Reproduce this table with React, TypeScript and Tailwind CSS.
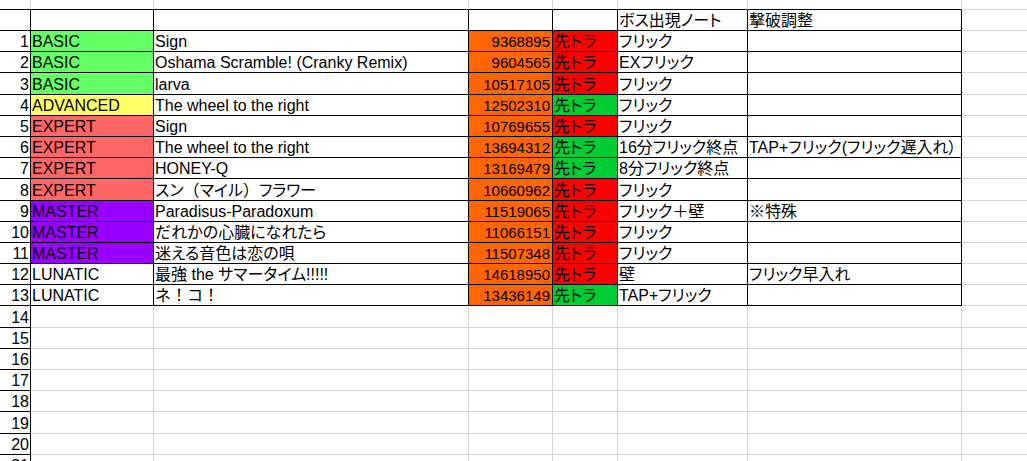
import React from "react";

type Row = {
  n: number;
  level: string;
  song: React.ReactNode;
  score: string;
  tra: "red" | "green";
  boss: string;
  adj: string;
};

const FW = "[font-feature-settings:normal]";

const rows: Row[] = [
  { n: 1, level: "BASIC", song: "Sign", score: "9368895", tra: "red", boss: "フリック", adj: "" },
  { n: 2, level: "BASIC", song: "Oshama Scramble! (Cranky Remix)", score: "9604565", tra: "red", boss: "EXフリック", adj: "" },
  { n: 3, level: "BASIC", song: "larva", score: "10517105", tra: "red", boss: "フリック", adj: "" },
  { n: 4, level: "ADVANCED", song: "The wheel to the right", score: "12502310", tra: "green", boss: "フリック", adj: "" },
  { n: 5, level: "EXPERT", song: "Sign", score: "10769655", tra: "red", boss: "フリック", adj: "" },
  { n: 6, level: "EXPERT", song: "The wheel to the right", score: "13694312", tra: "green", boss: "16分フリック終点", adj: "TAP+フリック(フリック遅入れ）" },
  { n: 7, level: "EXPERT", song: "HONEY-Q", score: "13169479", tra: "green", boss: "8分フリック終点", adj: "" },
  {
    n: 8,
    level: "EXPERT",
    song: (
      <>
        スン<span className={FW}>（</span>マイル<span className={FW}>）</span>フラワー
      </>
    ),
    score: "10660962",
    tra: "red",
    boss: "フリック",
    adj: "",
  },
  { n: 9, level: "MASTER", song: "Paradisus-Paradoxum", score: "11519065", tra: "red", boss: "フリック＋壁", adj: "※特殊" },
  { n: 10, level: "MASTER", song: "だれかの心臓になれたら", score: "11066151", tra: "red", boss: "フリック", adj: "" },
  { n: 11, level: "MASTER", song: "迷える音色は恋の唄", score: "11507348", tra: "red", boss: "フリック", adj: "" },
  { n: 12, level: "LUNATIC", song: "最強 the サマータイム!!!!!", score: "14618950", tra: "red", boss: "壁", adj: "フリック早入れ" },
  { n: 13, level: "LUNATIC", song: <span className={FW}>ネ！コ！</span>, score: "13436149", tra: "green", boss: "TAP+フリック", adj: "" },
];

const levelBg: Record<string, string> = {
  BASIC: "bg-[#66ff66]",
  ADVANCED: "bg-[#ffff66]",
  EXPERT: "bg-[#ff6666]",
  MASTER: "bg-[#9900ff]",
  LUNATIC: "bg-white",
};

const W = {
  a: "w-[31px] shrink-0",
  b: "w-[123px] shrink-0",
  c: "w-[315px] shrink-0",
  d: "w-[84px] shrink-0",
  e: "w-[65px] shrink-0",
  f: "w-[130px] shrink-0",
  g: "w-[214px] shrink-0",
  h: "flex-1 min-w-0",
};

const BLK_R = "border-r border-r-black";
const GRY_R = "border-r border-r-[#d4d4d4]";
const BLK_B = "border-b border-b-black";
const GRY_B = "border-b border-b-[#d4d4d4]";

function Cell({
  w,
  r,
  b,
  bg = "",
  extra = "",
  children,
}: {
  w: string;
  r: string;
  b: string;
  bg?: string;
  extra?: string;
  children?: React.ReactNode;
}) {
  return (
    <div
      className={`${w} ${r} ${b} ${bg} flex items-end overflow-visible whitespace-nowrap leading-[16px] pb-[1px] ${extra}`}
    >
      {children}
    </div>
  );
}

export default function App() {
  const empties = [14, 15, 16, 17, 18, 19, 20, 21];
  return (
    <div className="w-full h-[461px] overflow-hidden bg-white text-black text-[16px] font-['Liberation_Sans','Noto_Sans_CJK_JP',sans-serif] [font-feature-settings:'palt']">
      {/* partial row above the header */}
      <div className="flex h-[10px]">
        <Cell w={W.a} r={GRY_R} b={BLK_B} />
        <Cell w={W.b} r={GRY_R} b={BLK_B} />
        <Cell w={W.c} r={GRY_R} b={BLK_B} />
        <Cell w={W.d} r={GRY_R} b={BLK_B} />
        <Cell w={W.e} r={GRY_R} b={BLK_B} />
        <Cell w={W.f} r={GRY_R} b={BLK_B} />
        <Cell w={W.g} r={GRY_R} b={BLK_B} />
        <Cell w={W.h} r="" b={GRY_B} />
      </div>
      {/* header row */}
      <div className="flex h-[21px]">
        <Cell w={W.a} r={BLK_R} b={BLK_B} />
        <Cell w={W.b} r={BLK_R} b={BLK_B} />
        <Cell w={W.c} r={BLK_R} b={BLK_B} />
        <Cell w={W.d} r={BLK_R} b={BLK_B} />
        <Cell w={W.e} r={BLK_R} b={BLK_B} />
        <Cell w={W.f} r={BLK_R} b={BLK_B} extra="pl-[1px]">
          ボス出現ノート
        </Cell>
        <Cell w={W.g} r={BLK_R} b={BLK_B} extra="pl-[1px]">
          撃破調整
        </Cell>
        <Cell w={W.h} r="" b={GRY_B} />
      </div>
      {rows.map((row) => (
        <div key={row.n} className="flex h-[21.2px]">
          <Cell w={W.a} r={BLK_R} b={BLK_B} extra="justify-end pr-[1px]">
            {row.n}
          </Cell>
          <Cell w={W.b} r={BLK_R} b={BLK_B} bg={levelBg[row.level]} extra="pl-[1px]">
            {row.level}
          </Cell>
          <Cell w={W.c} r={BLK_R} b={BLK_B} extra="pl-[1px]">
            {row.song}
          </Cell>
          <Cell w={W.d} r={BLK_R} b={BLK_B} bg="bg-[#ff6600]" extra="justify-end pr-[2px] text-[15px]">
            {row.score}
          </Cell>
          <Cell
            w={W.e}
            r={BLK_R}
            b={BLK_B}
            bg={row.tra === "red" ? "bg-[#ff0000]" : "bg-[#00cc33]"}
            extra="pl-[1px]"
          >
            先トラ
          </Cell>
          <Cell w={W.f} r={BLK_R} b={BLK_B} extra="pl-[1px]">
            {row.boss}
          </Cell>
          <Cell w={W.g} r={BLK_R} b={BLK_B} extra="pl-[1px]">
            {row.adj}
          </Cell>
          <Cell w={W.h} r="" b={GRY_B} />
        </div>
      ))}
      {empties.map((n) => (
        <div key={n} className="flex h-[21.2px]">
          <Cell w={W.a} r={BLK_R} b={BLK_B} extra="justify-end pr-[1px]">
            {n}
          </Cell>
          <Cell w={W.b} r={GRY_R} b={GRY_B} />
          <Cell w={W.c} r={GRY_R} b={GRY_B} />
          <Cell w={W.d} r={GRY_R} b={GRY_B} />
          <Cell w={W.e} r={GRY_R} b={GRY_B} />
          <Cell w={W.f} r={GRY_R} b={GRY_B} />
          <Cell w={W.g} r={GRY_R} b={GRY_B} />
          <Cell w={W.h} r="" b={GRY_B} />
        </div>
      ))}
    </div>
  );
}
